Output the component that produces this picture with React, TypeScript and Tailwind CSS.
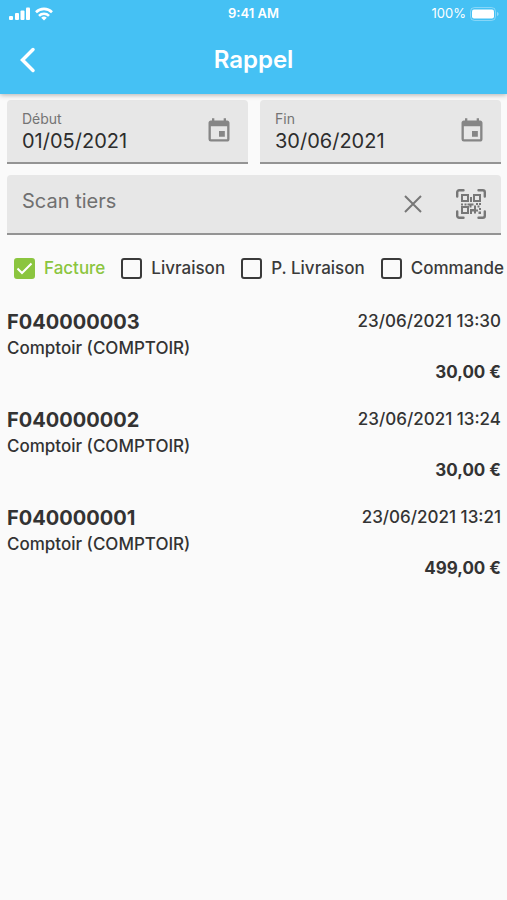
import React, { useState } from 'react';
import { MdEvent } from 'react-icons/md';

interface Receipt {
  id: string;
  customer: string;
  date: string;
  amount: string;
}

const receipts: Receipt[] = [
  { id: 'F040000003', customer: 'Comptoir (COMPTOIR)', date: '23/06/2021 13:30', amount: '30,00 €' },
  { id: 'F040000002', customer: 'Comptoir (COMPTOIR)', date: '23/06/2021 13:24', amount: '30,00 €' },
  { id: 'F040000001', customer: 'Comptoir (COMPTOIR)', date: '23/06/2021 13:21', amount: '499,00 €' },
];

const documentTypes = ['Facture', 'Livraison', 'P. Livraison', 'Commande'];

const StatusBar: React.FC = () => (
  <div className="grid h-7 grid-cols-3 items-center px-2 text-[13px]">
    <div className="flex items-center gap-1">
      <svg width="23" height="14" viewBox="0 0 23 14" fill="currentColor" aria-hidden="true">
        <rect x="1" y="9" width="4" height="4" rx="1" />
        <rect x="7" y="6" width="4" height="7" rx="1" />
        <rect x="12.5" y="3.5" width="4" height="9.5" rx="1" />
        <rect x="18" y="0.5" width="4" height="12.5" rx="1" />
      </svg>
      <svg width="18" height="14" viewBox="0 0 18 14" fill="none" stroke="currentColor" strokeWidth="2.6" aria-hidden="true">
        <path d="M1 5.2a11.4 11.4 0 0 1 16 0" />
        <path d="M4 8.8a7.1 7.1 0 0 1 10 0" />
        <path d="M9 13.4 6.2 10.8a4.1 4.1 0 0 1 5.6 0Z" fill="currentColor" stroke="none" />
      </svg>
    </div>
    <div className="text-center font-semibold">9:41 AM</div>
    <div className="flex items-center justify-end gap-1">
      <span>100%</span>
      <svg width="29" height="14" viewBox="0 0 29 14" fill="currentColor" aria-hidden="true">
        <rect x="0.5" y="0.5" width="25" height="13" rx="4" fill="none" stroke="currentColor" strokeOpacity="0.35" />
        <rect x="2" y="2.5" width="22" height="9" rx="2" />
        <path d="M27 5v4c1-.4 1.6-1.1 1.6-2S28 5.4 27 5Z" fillOpacity="0.4" />
      </svg>
    </div>
  </div>
);

const QrScanIcon: React.FC = () => (
  <svg width="30" height="30" viewBox="0 0 30 30" fill="none" stroke="currentColor" strokeWidth="2" aria-hidden="true">
    <path
      d="M1.2 7.5V3.2a2 2 0 0 1 2-2h4.3M22.5 1.2h4.3a2 2 0 0 1 2 2v4.3M28.8 22.5v4.3a2 2 0 0 1-2 2h-4.3M7.5 28.8H3.2a2 2 0 0 1-2-2v-4.3"
      strokeWidth="2.4"
      strokeLinecap="round"
    />
    <rect x="6" y="6" width="6" height="6" />
    <rect x="18" y="6" width="6" height="6" />
    <rect x="6" y="18" width="6" height="6" />
    <path
      d="M14 8h2v5h-2zM5 14.5h2v2H5zM8.5 14.5h2v2h-2zM11.5 14.5h6v2h-2v2h-2v-2h-2zM20 14h2v2h-2zM23 14h2v2h-2zM18 16.5h2v2h-2zM21.5 16.5h2v2h-2zM14 20h4v-1.5h2v2h2v2h-2v2h-2v-2h-2v2.5h-2zM23 19h2v2h-2zM22.5 22.5h2.5v2.5h-2.5z"
      fill="currentColor"
      stroke="none"
    />
  </svg>
);

interface DateFieldProps {
  id: string;
  label: string;
  value: string;
  onChange: (value: string) => void;
}

const DateField: React.FC<DateFieldProps> = ({ id, label, value, onChange }) => (
  <div className="flex h-16 min-w-0 flex-1 items-center rounded-t border-b-2 border-[#949494] bg-[#e7e7e7] pr-[15px] pl-[15px]">
    <div className="min-w-0 flex-1">
      <label htmlFor={id} className="block text-sm leading-5 text-[#747474]">
        {label}
      </label>
      <input
        id={id}
        type="text"
        value={value}
        onChange={e => onChange(e.target.value)}
        className="block h-6 w-full bg-transparent text-xl text-[#2d2d2d] outline-none"
      />
    </div>
    <button type="button" aria-label={`Choisir ${label}`} className="text-[#868686]">
      <MdEvent className="size-7" />
    </button>
  </div>
);

interface FilterProps {
  label: string;
  checked: boolean;
  onToggle: () => void;
}

const Filter: React.FC<FilterProps> = ({ label, checked, onToggle }) => (
  <label className={`flex shrink-0 items-center gap-[9px] ${checked ? 'text-[#8bc53f]' : 'text-[#3a3a3a]'}`}>
    <span className="relative size-[21px]">
      <input
        type="checkbox"
        checked={checked}
        onChange={onToggle}
        className="block size-[21px] appearance-none rounded-[3px] border-2 border-[#3a3a3a] checked:border-[#8bc53f] checked:bg-[#8bc53f]"
      />
      {checked && (
        <svg viewBox="0 0 21 21" fill="none" stroke="white" strokeWidth="2" className="pointer-events-none absolute inset-0 size-[21px]">
          <path d="m3.5 10.5 4.5 4.5 9.5-9.5" />
        </svg>
      )}
    </span>
    {label}
  </label>
);

const App: React.FC = () => {
  const [start, setStart] = useState('01/05/2021');
  const [end, setEnd] = useState('30/06/2021');
  const [search, setSearch] = useState('');
  const [selected, setSelected] = useState<string[]>(['Facture']);

  const toggleType = (type: string) => {
    setSelected(prev => (prev.includes(type) ? prev.filter(t => t !== type) : [...prev, type]));
  };

  return (
    <div className="min-h-screen bg-[#fafafa] font-['Inter',sans-serif] text-[#333333]">
      <header className="relative bg-[#45c1f4] text-white shadow-[0_1px_5px_rgba(0,0,0,0.3)]">
        <StatusBar />
        <div className="grid h-[66px] grid-cols-[56px_1fr_56px] items-center pb-0.5">
          <button type="button" aria-label="Retour" className="flex justify-center">
            <svg width="20" height="26" viewBox="0 0 20 26" fill="none" stroke="currentColor" strokeWidth="3.5" strokeLinecap="round">
              <path d="M15 2.5 4.5 13 15 23.5" />
            </svg>
          </button>
          <h1 className="text-center text-2xl font-semibold">Rappel</h1>
        </div>
      </header>

      <main className="pt-1.5 pr-1.5 pl-[7px]">
        <div className="flex gap-3">
          <DateField id="start" label="Début" value={start} onChange={setStart} />
          <DateField id="end" label="Fin" value={end} onChange={setEnd} />
        </div>

        <div className="mt-[11px] flex h-[60px] items-center rounded-t border-b-2 border-[#949494] bg-[#e7e7e7] pr-[15px] pl-[15px] text-[#777777]">
          <input
            type="text"
            aria-label="Scan tiers"
            placeholder="Scan tiers"
            value={search}
            onChange={e => setSearch(e.target.value)}
            className="mb-1.5 min-w-0 flex-1 bg-transparent text-xl text-[#2d2d2d] outline-none placeholder:text-[#707070]"
          />
          <button type="button" aria-label="Effacer" onClick={() => setSearch('')} className="mr-[34px]">
            <svg width="18" height="18" viewBox="0 0 18 18" fill="none" stroke="currentColor" strokeWidth="2">
              <path d="m1 1 16 16M17 1 1 17" />
            </svg>
          </button>
          <button type="button" aria-label="Scanner">
            <QrScanIcon />
          </button>
        </div>

        <div className="-mr-1.5 ml-[7px] flex h-[67px] items-center gap-4 overflow-x-auto text-[17px] font-medium whitespace-nowrap [scrollbar-width:none]">
          {documentTypes.map(type => (
            <Filter key={type} label={type} checked={selected.includes(type)} onToggle={() => toggleType(type)} />
          ))}
        </div>

        <ul className="pt-1.5">
          {receipts.map(receipt => (
            <li key={receipt.id} className="h-[98px]">
              <div className="flex items-center justify-between">
                <h2 className="text-xl leading-7 font-bold">{receipt.id}</h2>
                <time className="text-[17px] font-medium">{receipt.date}</time>
              </div>
              <p className="text-[17px] leading-6 font-medium">{receipt.customer}</p>
              <p className="text-right text-[17px] leading-6 font-bold">{receipt.amount}</p>
            </li>
          ))}
        </ul>
      </main>
    </div>
  );
};

export default App;
